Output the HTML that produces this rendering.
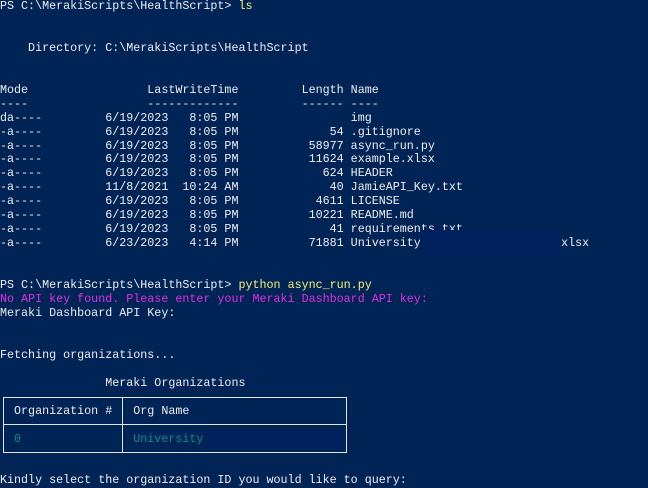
<!DOCTYPE html>
<html><head><meta charset="utf-8"><style>
html,body{margin:0;padding:0;width:648px;height:488px;overflow:hidden;background:#012456;}
pre{position:absolute;left:0;top:0;margin:0;font-family:"Liberation Mono",monospace;font-size:11.7px;line-height:13.95px;color:#eeedf0;}
.y{color:#f5f07a}.m{color:#e030e0}.t{color:#118a8c}
.r{position:absolute;background:#00215e}
.l{position:absolute;background:#e6e6dc}
</style></head><body>
<pre>PS C:\MerakiScripts\HealthScript&gt; <span class="y">ls</span>


    Directory: C:\MerakiScripts\HealthScript


Mode                 LastWriteTime         Length Name
----                 -------------         ------ ----
da----         6/19/2023   8:05 PM                img
-a----         6/19/2023   8:05 PM             54 .gitignore
-a----         6/19/2023   8:05 PM          58977 async_run.py
-a----         6/19/2023   8:05 PM          11624 example.xlsx
-a----         6/19/2023   8:05 PM            624 HEADER
-a----         11/8/2021  10:24 AM             40 JamieAPI_Key.txt
-a----         6/19/2023   8:05 PM           4611 LICENSE
-a----         6/19/2023   8:05 PM          10221 README.md
-a----         6/19/2023   8:05 PM             41 requirements.txt
-a----         6/23/2023   4:14 PM          71881 University                    xlsx


PS C:\MerakiScripts\HealthScript&gt; <span class="y">python async_run.py</span>
<span class="m">No API key found. Please enter your Meraki Dashboard API key:</span>
Meraki Dashboard API Key:


Fetching organizations...

               Meraki Organizations

  Organization #   Org Name

  <span class="t">0</span>                <span class="t">University</span>


Kindly select the organization ID you would like to query:</pre>
<div class="r" style="left:420px;top:230px;width:140px;height:25px"></div>
<div class="r" style="left:206px;top:430px;width:139px;height:20px"></div>
<div class="l" style="left:3px;top:397px;width:344px;height:1px"></div>
<div class="l" style="left:3px;top:424px;width:344px;height:1px"></div>
<div class="l" style="left:3px;top:452px;width:344px;height:1px"></div>
<div class="l" style="left:3px;top:397px;width:1px;height:56px"></div>
<div class="l" style="left:122px;top:397px;width:1px;height:56px"></div>
<div class="l" style="left:346px;top:397px;width:1px;height:56px"></div>
</body></html>
